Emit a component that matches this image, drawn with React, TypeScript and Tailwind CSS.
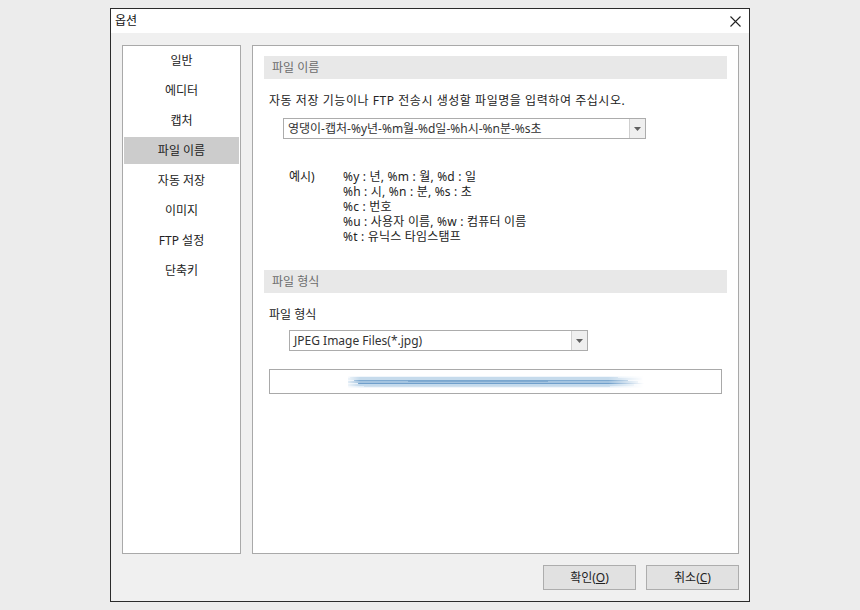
import React from 'react';

const FONT = { fontFamily: '"Noto Sans", "Noto Sans CJK KR", sans-serif' };

const NAV = ['일반', '에디터', '캡처', '파일 이름', '자동 저장', '이미지', 'FTP 설정', '단축키'];

const EXAMPLES = [
  '%y : 년, %m : 월, %d : 일',
  '%h : 시, %n : 분, %s : 초',
  '%c : 번호',
  '%u : 사용자 이름, %w : 컴퓨터 이름',
  '%t : 유닉스 타임스탬프',
];

function Combo({ value, width }: { value: string; width: string }) {
  return (
    <div className={`flex h-[21px] ${width} border border-[#acacac] bg-white`}>
      <div className="flex-1 pl-[4px] text-[12px] leading-[19px] text-[#333] whitespace-nowrap overflow-hidden">{value}</div>
      <div className="flex w-[16px] items-center justify-center border-l border-[#cfcfcf] bg-[#efefef]">
        <svg width="7" height="4" viewBox="0 0 7 4">
          <path d="M0 0 L7 0 L3.5 4 Z" fill="#606060" />
        </svg>
      </div>
    </div>
  );
}

function SectionHeader({ title }: { title: string }) {
  return (
    <div className="mx-[11px] h-[23px] bg-[#e8e8e8] pl-[8px] text-[12px] leading-[23px] text-[#6b6b6b]">{title}</div>
  );
}

export default function App() {
  return (
    <div className="w-[860px] h-[610px] bg-[#ececec] pt-[8px] pl-[110px]" style={FONT}>
      <div className="w-[640px] h-[594px] border border-[#2b2b2b] bg-[#f0f0f0] flex flex-col">
        {/* title bar */}
        <div className="h-[24px] bg-white flex items-center justify-between pl-[4px] pr-[8px]">
          <span className="text-[12px] text-[#111]">옵션</span>
          <svg width="11" height="11" viewBox="0 0 11 11">
            <path d="M0.5 0.5 L10.5 10.5 M10.5 0.5 L0.5 10.5" stroke="#222" strokeWidth="1.1" />
          </svg>
        </div>

        <div className="flex gap-[11px] pt-[12px] pl-[11px]">
          {/* left nav */}
          <div className="w-[119px] h-[509px] border border-[#a9a9a9] bg-white pt-[1px] px-[1px] flex flex-col gap-[3px]">
            {NAV.map((n) => (
              <div
                key={n}
                className={`h-[27px] text-center text-[12px] leading-[27px] text-[#222] ${n === '파일 이름' ? 'bg-[#cccccc]' : ''}`}
              >
                {n}
              </div>
            ))}
          </div>

          {/* right content */}
          <div className="w-[487px] h-[509px] border border-[#a9a9a9] bg-white pt-[10px]">
            <SectionHeader title="파일 이름" />
            <div className="mt-[14px] pl-[16px] text-[12px] leading-[16px] tracking-[0.55px] text-[#222] whitespace-nowrap">
              자동 저장 기능이나 FTP 전송시 생성할 파일명을 입력하여 주십시오.
            </div>
            <div className="mt-[9px] pl-[30px]">
              <Combo value="영댕이-캡처-%y년-%m월-%d일-%h시-%n분-%s초" width="w-[363px]" />
            </div>
            <div className="mt-[30px] flex pl-[36px] text-[12px] text-[#222]">
              <div className="w-[54px] leading-[15px]">예시)</div>
              <div className="flex flex-col">
                {EXAMPLES.map((e) => (
                  <div key={e} className="h-[15px] leading-[15px] tracking-[0.2px] whitespace-nowrap">{e}</div>
                ))}
              </div>
            </div>
            <div className="mt-[26px]">
              <SectionHeader title="파일 형식" />
            </div>
            <div className="mt-[14px] pl-[16px] text-[12px] leading-[16px] text-[#222]">파일 형식</div>
            <div className="mt-[7px] pl-[36px]">
              <Combo value="JPEG Image Files(*.jpg)" width="w-[299px]" />
            </div>
            <div className="mt-[18px] ml-[16px] w-[453px] h-[25px] border border-[#a9a9a9] bg-white flex items-center pl-[78px]">
              <svg width="296" height="14" viewBox="0 0 296 14">
                <defs>
                  <linearGradient id="fade" x1="0" x2="1" y1="0" y2="0">
                    <stop offset="0" stopColor="#ffffff" stopOpacity="0.3" />
                    <stop offset="0.04" stopColor="#ffffff" stopOpacity="1" />
                    <stop offset="0.88" stopColor="#ffffff" stopOpacity="1" />
                    <stop offset="1" stopColor="#ffffff" stopOpacity="0" />
                  </linearGradient>
                  <mask id="m">
                    <rect x="0" y="0" width="296" height="14" fill="url(#fade)" />
                  </mask>
                  <filter id="b" x="-5%" y="-50%" width="110%" height="200%">
                    <feGaussianBlur stdDeviation="0.5" />
                  </filter>
                </defs>
                <g mask="url(#m)" filter="url(#b)">
                  <rect x="0" y="1.5" width="296" height="11" fill="#e3eef7" />
                  <line x1="2" y1="2.5" x2="270" y2="2.5" stroke="#c6dbec" strokeWidth="1" />
                  <line x1="0" y1="4" x2="294" y2="4" stroke="#a9c8e2" strokeWidth="1.2" />
                  <line x1="6" y1="5.5" x2="280" y2="5.5" stroke="#7eaad1" strokeWidth="1" />
                  <line x1="0" y1="7" x2="290" y2="7" stroke="#8fb6d8" strokeWidth="1.4" />
                  <line x1="10" y1="8.5" x2="296" y2="8.5" stroke="#6f9fcb" strokeWidth="1" />
                  <line x1="0" y1="10" x2="286" y2="10" stroke="#a6c6e1" strokeWidth="1.2" />
                  <line x1="16" y1="11.5" x2="262" y2="11.5" stroke="#cfe0ee" strokeWidth="1" />
                  <line x1="60" y1="6.3" x2="200" y2="6.3" stroke="#5d8fbf" strokeWidth="0.6" />
                </g>
              </svg>
            </div>
          </div>
        </div>

        {/* buttons */}
        <div className="flex justify-end gap-[10px] pr-[10px] pt-[11px]">
          <button className="w-[93px] h-[25px] border border-[#adadad] bg-[#e1e1e1] text-[12px] text-[#222]">
            확인(<span className="underline">O</span>)
          </button>
          <button className="w-[93px] h-[25px] border border-[#adadad] bg-[#e1e1e1] text-[12px] text-[#222]">
            취소(<span className="underline">C</span>)
          </button>
        </div>
      </div>
    </div>
  );
}
